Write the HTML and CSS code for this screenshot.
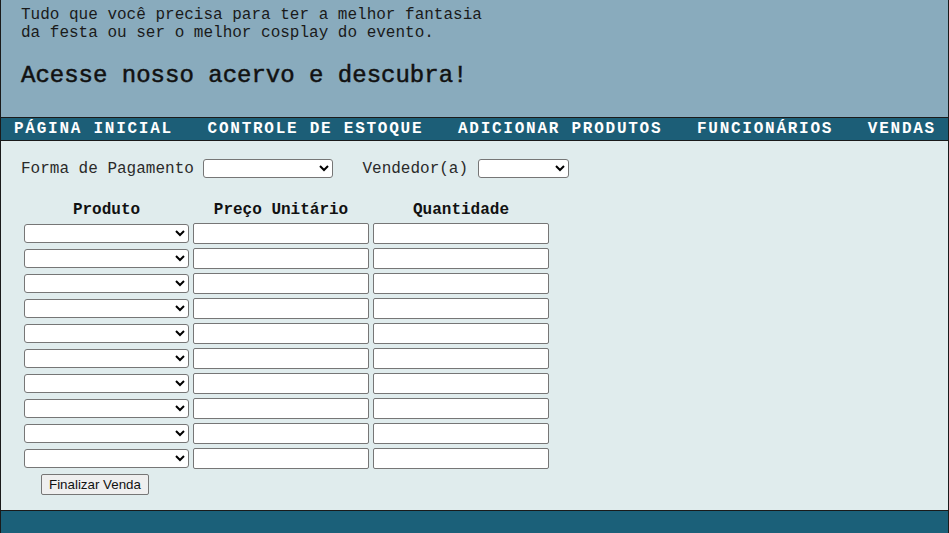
FILE: index.html
```html
<!DOCTYPE html>
<html lang="pt-BR">
<head>
<meta charset="utf-8">
<title>Vendas</title>
<link rel="stylesheet" href="styles.css">
</head>
<body>
<div class="page">
  <header class="hero">
    <p class="intro">Tudo que você precisa para ter a melhor fantasia<br>da festa ou ser o melhor cosplay do evento.</p>
    <h2 class="tagline">Acesse nosso acervo e descubra!</h2>
  </header>
  <nav class="menu">
    <a href="#">PÁGINA INICIAL</a>
    <a href="#">CONTROLE DE ESTOQUE</a>
    <a href="#">ADICIONAR PRODUTOS</a>
    <a href="#">FUNCIONÁRIOS</a>
    <a href="#">VENDAS</a>
  </nav>
  <main class="content">
    <form class="sale-form">
      <div class="top-row">
        <div class="field">
          <label class="field-label">Forma de Pagamento</label>
          <select class="sel sel-pay"></select>
        </div>
        <div class="field">
          <label class="field-label">Vendedor(a)</label>
          <select class="sel sel-seller"></select>
        </div>
      </div>
      <table class="items">
        <thead>
          <tr><th>Produto</th><th>Preço Unitário</th><th>Quantidade</th></tr>
        </thead>
        <tbody>
          <tr><td><select class="sel sel-prod"></select></td><td><input class="txt" type="text"></td><td><input class="txt" type="text"></td></tr>
          <tr><td><select class="sel sel-prod"></select></td><td><input class="txt" type="text"></td><td><input class="txt" type="text"></td></tr>
          <tr><td><select class="sel sel-prod"></select></td><td><input class="txt" type="text"></td><td><input class="txt" type="text"></td></tr>
          <tr><td><select class="sel sel-prod"></select></td><td><input class="txt" type="text"></td><td><input class="txt" type="text"></td></tr>
          <tr><td><select class="sel sel-prod"></select></td><td><input class="txt" type="text"></td><td><input class="txt" type="text"></td></tr>
          <tr><td><select class="sel sel-prod"></select></td><td><input class="txt" type="text"></td><td><input class="txt" type="text"></td></tr>
          <tr><td><select class="sel sel-prod"></select></td><td><input class="txt" type="text"></td><td><input class="txt" type="text"></td></tr>
          <tr><td><select class="sel sel-prod"></select></td><td><input class="txt" type="text"></td><td><input class="txt" type="text"></td></tr>
          <tr><td><select class="sel sel-prod"></select></td><td><input class="txt" type="text"></td><td><input class="txt" type="text"></td></tr>
          <tr><td><select class="sel sel-prod"></select></td><td><input class="txt" type="text"></td><td><input class="txt" type="text"></td></tr>
        </tbody>
      </table>
      <div class="actions">
        <button type="button" class="btn">Finalizar Venda</button>
      </div>
    </form>
  </main>
  <footer class="foot"></footer>
</div>
</body>
</html>
```

FILE: styles.css
```css
html, body {
  margin: 0;
  padding: 0;
}

body {
  font-family: "Liberation Mono", "Courier New", monospace;
  color: #111;
  background: #e0eced;
}

.page {
  width: 949px;
  box-sizing: border-box;
  border-left: 1px solid #1a1a1a;
  border-right: 1px solid #1a1a1a;
}

.hero {
  background: #89abbd;
  padding: 6px 20px 28px;
}

.intro {
  margin: 0;
  font-size: 16px;
  line-height: 18px;
  color: #1a1a1a;
}

.tagline {
  margin: 20px 0 0;
  font-size: 24px;
  line-height: 27px;
  font-weight: normal;
  -webkit-text-stroke: 0.5px #111;
}

.menu {
  display: flex;
  justify-content: space-between;
  align-items: center;
  background: #1c5e77;
  border-top: 1px solid #1a1a1a;
  border-bottom: 1px solid #1a1a1a;
  padding: 0 12px 0 13px;
  height: 22px;
}

.menu a {
  color: #fff;
  text-decoration: none;
  font-weight: bold;
  font-size: 16px;
  line-height: 22px;
  letter-spacing: 1.75px;
}

.content {
  background: #e0eced;
  padding: 18px 20px 15px;
}

.top-row {
  display: flex;
  align-items: center;
  gap: 29px;
}

.field {
  display: flex;
  align-items: center;
  gap: 9.6px;
}

.field-label {
  font-size: 16px;
  color: #2a2a2a;
}

.sel {
  height: 19px;
  box-sizing: border-box;
  border: 1px solid #767676;
  border-radius: 3px;
  background: #fff;
  font: 13.333px "Liberation Sans", Arial, sans-serif;
}

.sel-pay {
  width: 130px;
}

.sel-seller {
  width: 91px;
}

.sel-prod {
  width: 165px;
  display: block;
}

.items {
  margin-top: 20px;
  border-spacing: 2px;
}

.items th {
  font-size: 16px;
  font-weight: bold;
  padding: 1px;
  text-align: center;
  color: #111;
}

.items td {
  padding: 1px;
}

.txt {
  display: block;
  width: 176px;
  height: 21px;
  box-sizing: border-box;
  border: 1px solid #767676;
  border-radius: 2px;
  padding: 1px 2px;
  background: #fff;
  font: 13.333px "Liberation Sans", Arial, sans-serif;
}

.actions {
  padding-left: 20px;
  margin-top: 2px;
}

.btn {
  font: 13.333px "Liberation Sans", Arial, sans-serif;
  color: #111;
  padding: 1px 7px;
  height: 21px;
  border: 1px solid #767676;
  border-radius: 2px;
  background: #efefef;
}

.foot {
  background: #1b6079;
  border-top: 1px solid #1a1a1a;
  height: 22px;
}
```
